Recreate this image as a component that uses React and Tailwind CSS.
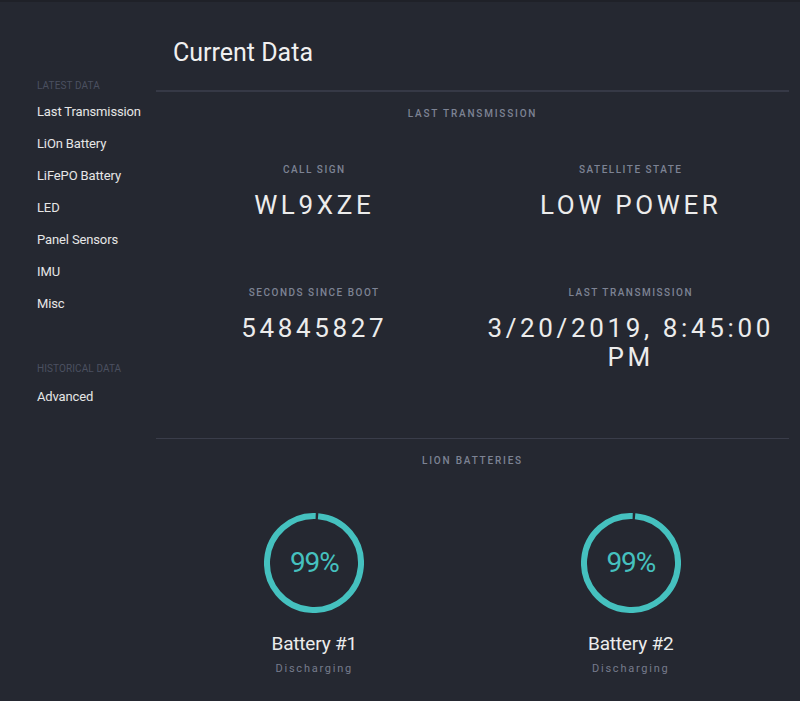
import { useMemo } from "react";

const latest = ["Last Transmission", "LiOn Battery", "LiFePO Battery", "LED", "Panel Sensors", "IMU", "Misc"];
const historical = ["Advanced"];

const transmission = [
  { label: "Call Sign", value: "WL9XZE" },
  { label: "Satellite State", value: "LOW POWER" },
  { label: "Seconds Since Boot", value: "54845827" },
  { label: "Last Transmission", value: "3/20/2019, 8:45:00 PM" },
];

const batteries = [
  { name: "Battery #1", level: 99, state: "Discharging" },
  { name: "Battery #2", level: 99, state: "Discharging" },
];

function Ring({ level }) {
  const r = 47;
  const circ = 2 * Math.PI * r;
  const dash = useMemo(() => (circ * level) / 100, [circ, level]);
  return (
    <div className="relative w-[100px] h-[100px]">
      <svg width="100" height="100" viewBox="0 0 100 100" className="absolute inset-0">
        <circle
          cx="50"
          cy="50"
          r={r}
          fill="none"
          stroke="#45c1bf"
          strokeWidth="6"
          strokeDasharray={`${dash} ${circ}`}
          transform="rotate(-85 50 50)"
        />
      </svg>
      <div className="absolute inset-0 flex items-center justify-center text-[28px] text-[#45c1bf] tracking-[-0.04em]">
        {level}%
      </div>
    </div>
  );
}

function SectionTitle({ children }) {
  return (
    <p className="text-center text-[10px] font-medium uppercase tracking-[0.18em] text-[#7d8394]">
      {children}
    </p>
  );
}

export default function App() {
  return (
    <div
      className="min-h-[701px] bg-[#252831] border-t-2 border-[#1f2128] flex text-[#e4e4e4]"
      style={{ fontFamily: "Roboto, 'Liberation Sans', sans-serif" }}
    >
      <aside className="w-[156px] shrink-0 pl-[37px] pt-[76px]">
        <p className="text-[10px] uppercase text-[#4b5060] tracking-[0.01em] mb-[3px]">Latest Data</p>
        <ul className="flex flex-col">
          {latest.map((item) => (
            <li key={item} className="h-[32px] text-[13px] text-[#e6e6e6] tracking-[-0.01em] flex items-center">
              {item}
            </li>
          ))}
        </ul>
        <p className="text-[10px] uppercase text-[#4b5060] tracking-[0.01em] mt-[41px] mb-[5px]">Historical Data</p>
        <ul className="flex flex-col">
          {historical.map((item) => (
            <li key={item} className="h-[32px] text-[13px] text-[#e6e6e6] tracking-[-0.01em] flex items-center">
              {item}
            </li>
          ))}
        </ul>
      </aside>

      <main className="w-[633px] shrink-0">
        <h1 className="pl-[17px] pt-[36px] pb-[22px] text-[25px] leading-[30px] text-[#f0f0f0]">Current Data</h1>

        <section className="border-t-2 border-[#363946] pt-[14px] pb-[66px]">
          <SectionTitle>Last Transmission</SectionTitle>
          <div className="grid grid-cols-2 gap-y-[65px] mt-[41px]">
            {transmission.map((t) => (
              <div key={t.label} className="flex flex-col items-center text-center px-[12px]">
                <p className="text-[10px] font-medium uppercase tracking-[0.15em] text-[#7d8394]">{t.label}</p>
                <p className="mt-[14px] text-[26px] leading-[29px] tracking-[0.14em] text-[#ececec]">{t.value}</p>
              </div>
            ))}
          </div>
        </section>

        <section className="border-t border-[#3a3d4a] pt-[14px]">
          <SectionTitle>Lion Batteries</SectionTitle>
          <div className="grid grid-cols-2 mt-[45px]">
            {batteries.map((b) => (
              <div key={b.name} className="flex flex-col items-center">
                <Ring level={b.level} />
                <p className="mt-[19px] text-[19px] leading-[24px] tracking-[-0.01em] text-[#ececec]">{b.name}</p>
                <p className="mt-[5px] text-[11px] tracking-[0.16em] text-[#767b8c]">{b.state}</p>
              </div>
            ))}
          </div>
        </section>
      </main>
    </div>
  );
}
